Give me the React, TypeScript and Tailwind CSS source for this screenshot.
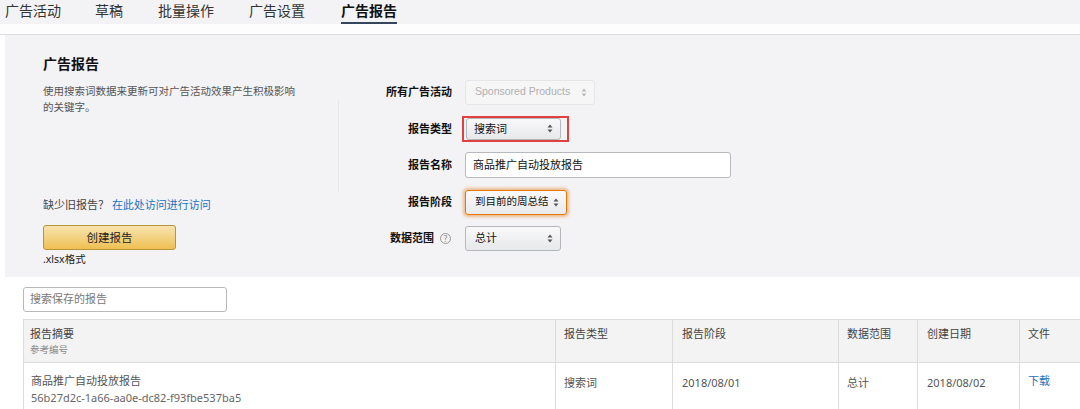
import React from "react";

const FONT = { fontFamily: '"Noto Sans", "Noto Sans CJK SC", sans-serif' };

function Arrows({ color = "#555" }: { color?: string }) {
  return (
    <svg width="6" height="9" viewBox="0 0 6 9" className="shrink-0">
      <path d="M3 0.5 L5.5 3.5 L0.5 3.5 Z" fill={color} />
      <path d="M3 8.5 L5.5 5.5 L0.5 5.5 Z" fill={color} />
    </svg>
  );
}

function Select({
  text,
  w,
  variant = "normal",
}: {
  text: string;
  w: string;
  variant?: "normal" | "disabled" | "focus";
}) {
  const base =
    "h-[25px] flex items-center justify-between pl-[9px] pr-[7px] rounded-[3px] text-[11px] border";
  if (variant === "disabled")
    return (
      <div className={`${base} ${w} border-[#e6e6e8] bg-[#f6f6f7] text-[#b0b0b0]`}>
        <span className="font-['Liberation_Sans',sans-serif] text-[10.5px]">{text}</span>
        <Arrows color="#bbb" />
      </div>
    );
  if (variant === "focus")
    return (
      <div
        className={`${base} ${w} border-[#e77600] bg-gradient-to-b from-[#f9f9fa] to-[#e9eaec] text-[#111] shadow-[0_0_3px_2px_rgba(228,121,17,0.45)]`}
      >
        <span className="text-[10.5px]">{text}</span>
        <Arrows />
      </div>
    );
  return (
    <div
      className={`${base} ${w} border-[#b5b7bb] bg-gradient-to-b from-[#f9f9fa] to-[#e7e8ea] text-[#111]`}
    >
      <span>{text}</span>
      <Arrows />
    </div>
  );
}

function Row({ label, children, help }: { label: string; children: React.ReactNode; help?: boolean }) {
  return (
    <div className="flex items-center h-[36.6px]">
      <div className="w-[92px] flex items-center justify-end text-[11px] font-semibold text-[#111]">
        <span>{label}</span>
        {help && (
          <span className="ml-[6px] mr-[1px] w-[11px] h-[11px] rounded-full border border-[#999] text-[#888] text-[8px] leading-none flex items-center justify-center font-normal">
            ?
          </span>
        )}
      </div>
      <div className="ml-[13px]">{children}</div>
    </div>
  );
}

export default function App() {
  return (
    <div className="w-[1080px] h-[409px] overflow-hidden bg-white text-[#333]" style={FONT}>
      {/* tabs */}
      <div className="h-[24px] bg-[#f3f3f5] flex items-start text-[14px] text-[#333] leading-[21px]">
        <div className="ml-[5px]">广告活动</div>
        <div className="ml-[34px]">草稿</div>
        <div className="ml-[35px]">批量操作</div>
        <div className="ml-[35px]">广告设置</div>
        <div className="ml-[36px] font-bold text-[#111] h-[24px] border-b-2 border-[#34465c]">广告报告</div>
      </div>
      <div className="h-[11px] bg-[#fdfdfd] border-b border-[#dcdbde]" />

      {/* panel */}
      <div className="ml-[5px] h-[242px] bg-[#f3f2f4] flex pl-[38px] pt-[19px]">
        <div className="w-[295px] flex flex-col">
          <div className="text-[14px] font-bold text-[#111] leading-[20px]">广告报告</div>
          <div className="mt-[9px] w-[258px] text-[10.5px] leading-[16px] text-[#555]">
            使用搜索词数据来更新可对广告活动效果产生积极影响的关键字。
          </div>
          <div className="mt-[82px] text-[11px] leading-[16px] text-[#444]">
            缺少旧报告？ <span className="text-[#1a73c0]">在此处访问进行访问</span>
          </div>
          <div className="mt-[12px] w-[133px] h-[25px] rounded-[3px] border border-[#b8953a] bg-gradient-to-b from-[#f8e3ad] to-[#eec04e] flex items-center justify-center text-[11.5px] text-[#222]">
            创建报告
          </div>
          <div className="mt-[2px] text-[10.5px] leading-[14px] text-[#222]">.xlsx格式</div>
        </div>
        <div className="w-px h-[92px] mt-[46px] bg-[#e7e6e9]" />
        <div className="ml-[21px] mt-[20px] flex flex-col">
          <Row label="所有广告活动">
            <Select text="Sponsored Products" w="w-[130px]" variant="disabled" />
          </Row>
          <Row label="报告类型">
            <div className="-ml-[3px] w-[107px] h-[26px] border-2 border-[#e0403f] flex items-center pl-[2px]">
              <Select text="搜索词" w="w-[95px] !h-[22px] !pl-[7px]" />
            </div>
          </Row>
          <Row label="报告名称">
            <div className="w-[266px] h-[26px] border border-[#b8b9bc] rounded-[3px] bg-white flex items-center pl-[7px] text-[11px] text-[#111]">
              商品推广自动投放报告
            </div>
          </Row>
          <Row label="报告阶段">
            <Select text="到目前的周总结" w="w-[102px]" variant="focus" />
          </Row>
          <Row label="数据范围" help>
            <Select text="总计" w="w-[96px]" />
          </Row>
        </div>
      </div>

      {/* search */}
      <div className="ml-[23px] mt-[10px] w-[204px] h-[25px] border border-[#b8b9bc] rounded-[3px] flex items-center pl-[6px] text-[11px] text-[#777]">
        搜索保存的报告
      </div>

      {/* table */}
      <div className="ml-[23px] mt-[7px] w-[1075px] border border-[#dcdcdc] text-[11px]">
        <div className="flex h-[43px] bg-[#f3f3f3] border-b border-[#dcdcdc] text-[#444]">
          <div className="w-[532px] border-r border-[#dcdcdc] pl-[6px] pt-[6px] leading-[16px]">
            <div>报告摘要</div>
            <div className="text-[9.5px] text-[#888]">参考编号</div>
          </div>
          <div className="w-[117px] border-r border-[#dcdcdc] pl-[8px] pt-[6px] leading-[16px]">报告类型</div>
          <div className="w-[166px] border-r border-[#dcdcdc] pl-[9px] pt-[6px] leading-[16px]">报告阶段</div>
          <div className="w-[79px] border-r border-[#dcdcdc] pl-[8px] pt-[6px] leading-[16px]">数据范围</div>
          <div className="w-[102px] border-r border-[#dcdcdc] pl-[9px] pt-[6px] leading-[16px]">创建日期</div>
          <div className="flex-1 pl-[8px] pt-[6px] leading-[16px]">文件</div>
        </div>
        <div className="flex h-[60px] text-[#555]">
          <div className="w-[532px] border-r border-[#dcdcdc] pl-[7px] pt-[9px] leading-[17px]">
            <div>商品推广自动投放报告</div>
            <div className="text-[#666]">56b27d2c-1a66-aa0e-dc82-f93fbe537ba5</div>
          </div>
          <div className="w-[117px] border-r border-[#dcdcdc] pl-[8px] pt-[11px] leading-[17px]">搜索词</div>
          <div className="w-[166px] border-r border-[#dcdcdc] pl-[9px] pt-[11px] leading-[17px]">2018/08/01</div>
          <div className="w-[79px] border-r border-[#dcdcdc] pl-[8px] pt-[11px] leading-[17px]">总计</div>
          <div className="w-[102px] border-r border-[#dcdcdc] pl-[9px] pt-[11px] leading-[17px]">2018/08/02</div>
          <div className="flex-1 pl-[8px] pt-[9px] leading-[17px] text-[#1a73c0]">下载</div>
        </div>
      </div>
    </div>
  );
}
